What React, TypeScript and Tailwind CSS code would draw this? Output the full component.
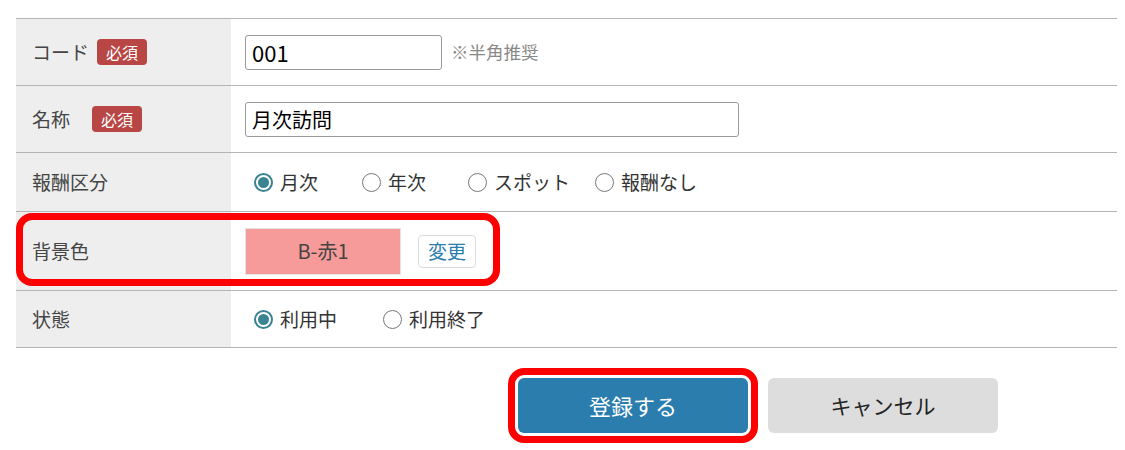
const font = { fontFamily: '"Noto Sans CJK JP", "Noto Sans", sans-serif' };

function Badge({ gap }: { gap: string }) {
  return (
    <span
      className={`${gap} inline-flex h-[26px] items-center rounded-[4px] bg-[#b84644] px-[9px] text-[16px] leading-none text-white`}
    >
      必須
    </span>
  );
}

function Radio({ label, checked }: { label: string; checked?: boolean }) {
  return (
    <label className="flex items-center gap-[7px] text-[19px] text-[#333]">
      {checked ? (
        <span className="flex h-[19px] w-[19px] items-center justify-center rounded-full border-2 border-[#3a8491] bg-white">
          <span className="h-[11px] w-[11px] rounded-full bg-[#3a8491]" />
        </span>
      ) : (
        <span className="h-[19px] w-[19px] rounded-full border-[1.5px] border-[#777] bg-white" />
      )}
      {label}
    </label>
  );
}

function Row({
  label,
  height,
  children,
  highlight,
}: {
  label: React.ReactNode;
  height: string;
  children: React.ReactNode;
  highlight?: boolean;
}) {
  return (
    <div className={`relative flex border-b border-[#b4b4b4] ${height}`}>
      <div className="flex w-[215px] items-center bg-[#eeeeee] pl-4 text-[19px] text-[#444]">
        {label}
      </div>
      <div className="flex flex-1 items-center pl-[14px]">{children}</div>
      {highlight && (
        <div className="pointer-events-none absolute left-0 top-[1px] h-[73px] w-[484px] rounded-[16px] border-[7px] border-[#ff0000]" />
      )}
    </div>
  );
}

export default function App() {
  return (
    <div className="h-[450px] w-[1125px] bg-white pl-4 pr-2 pt-[18px]" style={font}>
      <div className="border-t border-[#b4b4b4]">
        <Row
          height="h-[67px]"
          label={
            <>
              コード
              <Badge gap="ml-[8px]" />
            </>
          }
        >
          <input
            readOnly
            value="001"
            className="h-[35px] w-[197px] rounded-[3px] border border-[#999] px-[6px] text-[22px] text-black outline-none"
          />
          <span className="ml-[9px] text-[17.5px] text-[#888]">※半角推奨</span>
        </Row>
        <Row
          height="h-[67px]"
          label={
            <>
              名称
              <Badge gap="ml-[22px]" />
            </>
          }
        >
          <input
            readOnly
            value="月次訪問"
            className="h-[35px] w-[494px] rounded-[3px] border border-[#999] px-[6px] text-[20px] text-black outline-none"
          />
        </Row>
        <Row height="h-[59px]" label="報酬区分">
          <div className="flex items-center pl-[9px]">
            <Radio label="月次" checked />
            <div className="ml-[44px]">
              <Radio label="年次" />
            </div>
            <div className="ml-[42px]">
              <Radio label="スポット" />
            </div>
            <div className="ml-[25px]">
              <Radio label="報酬なし" />
            </div>
          </div>
        </Row>
        <Row height="h-[79px]" label="背景色" highlight>
          <div className="flex h-[47px] w-[156px] items-center justify-center border border-[#e4e4e4] bg-[#f79a9a] text-[20px] text-[#444]">
            B-赤1
          </div>
          <button className="ml-[17px] flex h-[33px] w-[58px] items-center justify-center rounded-[4px] border border-[#dcdcdc] bg-white text-[19px] text-[#2a7dad]">
            変更
          </button>
        </Row>
        <Row height="h-[57px]" label="状態">
          <div className="flex items-center pl-[9px]">
            <Radio label="利用中" checked />
            <div className="ml-[46px]">
              <Radio label="利用終了" />
            </div>
          </div>
        </Row>
      </div>
      <div className="flex gap-[20px] pl-[502px] pt-[30px]">
        <button className="flex h-[55px] w-[230px] items-center justify-center rounded-[6px] bg-[#2a7dad] text-[22px] text-white outline-[7px] outline-offset-[3px] outline-[#ff0000] outline-solid">
          登録する
        </button>
        <button className="flex h-[55px] w-[230px] items-center justify-center rounded-[6px] bg-[#dddddd] text-[21px] text-[#222]">
          キャンセル
        </button>
      </div>
    </div>
  );
}
